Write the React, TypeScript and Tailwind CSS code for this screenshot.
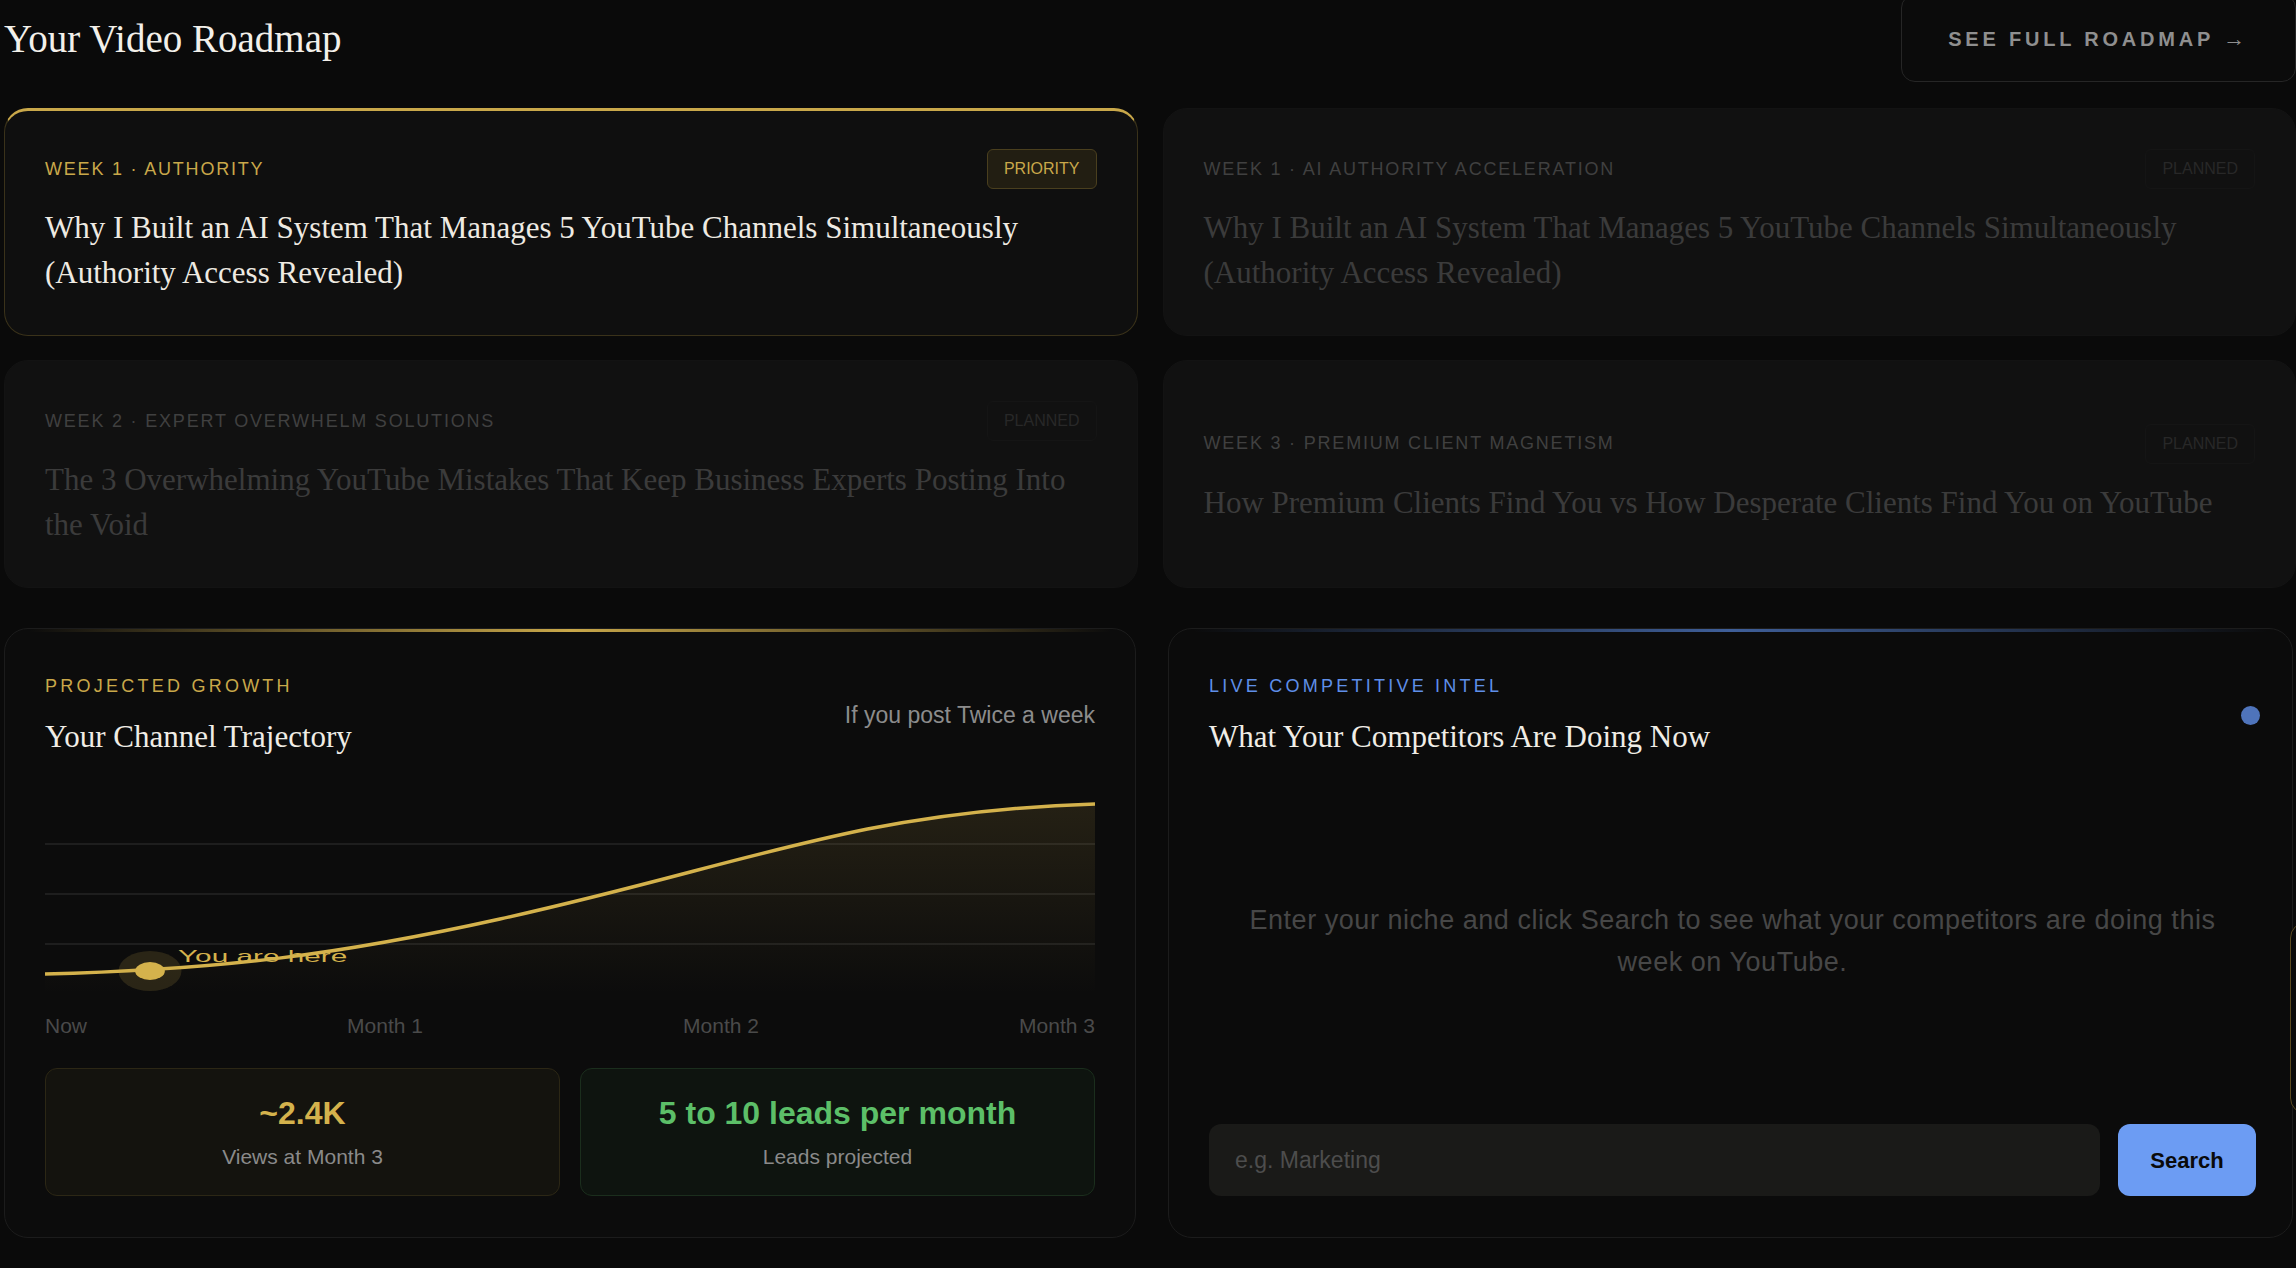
import clsx from "clsx";

const sans = "font-['Liberation_Sans',Arial,sans-serif]";
const serif = "font-['Liberation_Serif','Times_New_Roman',serif]";

type Week = {
  label: string;
  title: string;
  status: "priority" | "planned";
};

const weeks: Week[] = [
  {
    label: "Week 1 · Authority",
    title: "Why I Built an AI System That Manages 5 YouTube Channels Simultaneously (Authority Access Revealed)",
    status: "priority",
  },
  {
    label: "Week 1 · AI Authority Acceleration",
    title: "Why I Built an AI System That Manages 5 YouTube Channels Simultaneously (Authority Access Revealed)",
    status: "planned",
  },
  {
    label: "Week 2 · Expert Overwhelm Solutions",
    title: "The 3 Overwhelming YouTube Mistakes That Keep Business Experts Posting Into the Void",
    status: "planned",
  },
  {
    label: "Week 3 · Premium Client Magnetism",
    title: "How Premium Clients Find You vs How Desperate Clients Find You on YouTube",
    status: "planned",
  },
];

function RoadmapCard({ week }: { week: Week }) {
  const active = week.status === "priority";
  return (
    <div
      className={clsx(
        "flex flex-col justify-center rounded-[24px] border px-10 pb-10",
        active
          ? "border-[#3a321a] border-t-[3px] border-t-[#c9a84a] bg-[#0f0f0f] pt-[38px]"
          : "border-[#131313] bg-[#111111] pt-10"
      )}
    >
      <div className="flex h-10 items-center justify-between">
        <span
          className={clsx(
            sans,
            "text-[18px] uppercase tracking-[0.1em]",
            active ? "text-[#c9a84a]" : "text-[#404040]"
          )}
        >
          {week.label}
        </span>
        <span
          className={clsx(
            sans,
            "flex h-10 items-center rounded-md border px-4 text-[16px] uppercase",
            active
              ? "border-[#4a3f1e] bg-[#221e12] text-[#c9a84a]"
              : "border-[#151515] bg-[#111111] text-[#282828]"
          )}
        >
          {active ? "Priority" : "Planned"}
        </span>
      </div>
      <h3
        className={clsx(
          serif,
          "mt-4 text-[31px] leading-[45px]",
          active ? "text-[#eeeae2]" : "text-[#3b3b3b]"
        )}
      >
        {week.title}
      </h3>
    </div>
  );
}

function GrowthCard() {
  return (
    <div className="flex flex-col overflow-hidden rounded-[24px] border border-[#1c1c1c] bg-[#0c0c0c]">
      <div className="mx-6 h-[3px] bg-linear-to-r from-transparent via-[#c9a84a] to-transparent" />
      <div className="flex flex-col px-10 pb-[41px] pt-[40px]">
        <div className="flex items-center justify-between">
          <div className="flex flex-col">
            <span className={clsx(sans, "text-[18px] uppercase leading-[28px] tracking-[0.18em] text-[#c9a84a]")}>
              Projected Growth
            </span>
            <h3 className={clsx(serif, "mt-4 text-[31px] leading-[42px] text-[#f0ede6]")}>
              Your Channel Trajectory
            </h3>
          </div>
          <span className={clsx(sans, "text-[23px] text-[#8c8c8c]")}>If you post Twice a week</span>
        </div>

        <svg className="mt-9 block h-[200px] w-full" viewBox="0 0 600 200" preserveAspectRatio="none">
          <defs>
            <linearGradient id="growthFill" x1="0" y1="0" x2="0" y2="1">
              <stop offset="0%" stopColor="#c9a84a" stopOpacity="0.13" />
              <stop offset="100%" stopColor="#c9a84a" stopOpacity="0" />
            </linearGradient>
          </defs>
          {[50, 100, 150].map((y) => (
            <line key={y} x1="0" x2="600" y1={y} y2={y} stroke="#1e1e1e" strokeWidth="2" vectorEffect="non-scaling-stroke" />
          ))}
          <path
            d="M0 180 C 100 176, 170 160, 260 125 C 350 90, 400 60, 470 35 C 520 18, 560 12, 600 10 L 600 200 L 0 200 Z"
            fill="url(#growthFill)"
          />
          <path
            d="M0 180 C 100 176, 170 160, 260 125 C 350 90, 400 60, 470 35 C 520 18, 560 12, 600 10"
            fill="none"
            stroke="#d4b24c"
            strokeWidth="3.5"
            vectorEffect="non-scaling-stroke"
          />
          <ellipse cx="60" cy="177" rx="18" ry="20" fill="#c9a84a" fillOpacity="0.16" />
          <ellipse cx="60" cy="177" rx="8.5" ry="9" fill="#d4b24c" />
          <text x="76" y="168" fill="#d4b24c" fontSize="17" fontFamily="Liberation Sans, Arial, sans-serif">
            You are here
          </text>
        </svg>

        <div className={clsx(sans, "mt-[18px] flex justify-between text-[21px] leading-[28px] text-[#4a4a4a]")}>
          <span>Now</span>
          <span>Month 1</span>
          <span>Month 2</span>
          <span>Month 3</span>
        </div>

        <div className="mt-7 grid grid-cols-2 gap-5">
          <div className="flex h-[128px] flex-col items-center justify-center rounded-xl border border-[#2c2715] bg-[#14130e]">
            <span className={clsx(sans, "text-[32px] font-bold leading-[40px] text-[#d4b24c]")}>~2.4K</span>
            <span className={clsx(sans, "mt-[10px] text-[21px] leading-[28px] text-[#8a8a8a]")}>Views at Month 3</span>
          </div>
          <div className="flex h-[128px] flex-col items-center justify-center rounded-xl border border-[#1b2e1d] bg-[#0e140f]">
            <span className={clsx(sans, "text-[32px] font-bold leading-[40px] text-[#5cbf68]")}>
              5 to 10 leads per month
            </span>
            <span className={clsx(sans, "mt-[10px] text-[21px] leading-[28px] text-[#8a8a8a]")}>Leads projected</span>
          </div>
        </div>
      </div>
    </div>
  );
}

function IntelCard() {
  return (
    <div className="flex flex-col overflow-hidden rounded-[24px] border border-[#1c1c1c] bg-[#0b0b0b]">
      <div className="mx-6 h-[3px] bg-linear-to-r from-transparent via-[#3f5f99] to-transparent" />
      <div className="flex flex-1 flex-col pb-[41px] pl-10 pr-[36px] pt-[40px]">
        <div className="flex items-center justify-between">
          <div className="flex flex-col">
            <span className={clsx(sans, "text-[18px] uppercase leading-[28px] tracking-[0.18em] text-[#5f8fe8]")}>
              Live Competitive Intel
            </span>
            <h3 className={clsx(serif, "mt-4 text-[31px] leading-[42px] text-[#f0ede6]")}>
              What Your Competitors Are Doing Now
            </h3>
          </div>
          <span className="mr-[-4px] h-[19px] w-[19px] rounded-full bg-[#4f74bb]" />
        </div>

        <div className="flex flex-1 items-center justify-center">
          <p className={clsx(sans, "text-center text-[27px] leading-[42px] tracking-[0.02em] text-[#474747]")}>
            Enter your niche and click Search to see what your competitors are doing this
            <br />
            week on YouTube.
          </p>
        </div>

        <div className="flex gap-[18px]">
          <input
            placeholder="e.g. Marketing"
            className={clsx(
              sans,
              "h-[72px] flex-1 rounded-xl bg-[#1a1a18] px-[26px] text-[23px] text-[#cfcfcf] outline-none placeholder:text-[#4d4d4d]"
            )}
          />
          <button
            className={clsx(sans, "h-[72px] w-[138px] rounded-xl bg-[#6c9cf3] text-[22px] font-bold text-[#0a0a0a]")}
          >
            Search
          </button>
        </div>
      </div>
    </div>
  );
}

export default function App() {
  return (
    <div className="relative min-h-screen overflow-hidden bg-[#0a0a0a] pl-[4px]">
      {/* Header */}
      <div className="-mt-[6px] flex items-center justify-between">
        <h1 className={clsx(serif, "text-[39px] leading-none text-[#f3f0ea]")}>Your Video Roadmap</h1>
        <button
          className={clsx(
            sans,
            "h-[88px] rounded-[14px] border border-[#262626] bg-[#0b0b0b] px-[46px] text-[20px] font-bold uppercase tracking-[0.19em] text-[#8f8f8f]"
          )}
        >
          See full roadmap <span className="text-[22px]">→</span>
        </button>
      </div>

      {/* Roadmap cards */}
      <div className="mt-[26px] grid grid-cols-2 gap-x-[25px] gap-y-[24px]">
        {weeks.map((w, i) => (
          <RoadmapCard key={i} week={w} />
        ))}
      </div>

      {/* Growth + intel */}
      <div className="mt-[40px] grid grid-cols-[1132px_1fr] gap-[32px] pr-[3px]">
        <GrowthCard />
        <IntelCard />
      </div>

      {/* floating panel peeking in from the right edge */}
      <div className="fixed left-[2290px] top-[922px] h-[192px] w-[200px] rounded-2xl border border-[#5a4a20] bg-[#0a0a0a]" />
    </div>
  );
}
